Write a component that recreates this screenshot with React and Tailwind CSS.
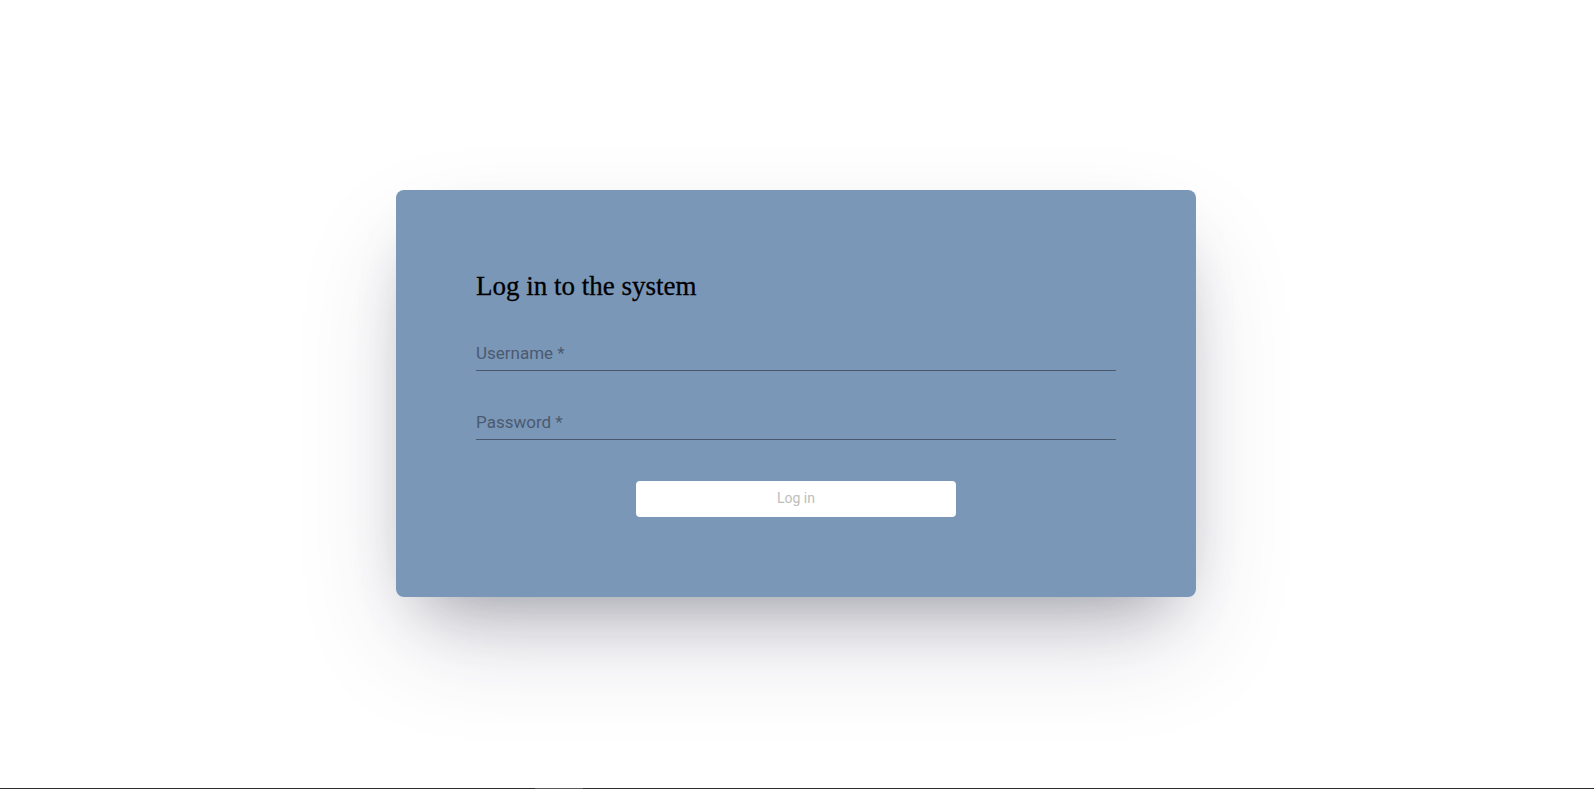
export default function App() {
  return (
    <div className="flex h-screen w-full flex-col bg-white">
      <div className="flex flex-1 items-center justify-center pb-[2px] pr-[2px]">
        <div className="w-[800px] rounded-[8px] bg-[#7a97b8] px-[80px] py-[80px] shadow-[0_50px_100px_-20px_rgba(50,50,93,0.25),0_30px_60px_-30px_rgba(0,0,0,0.3)]">
          <h1
            className="mt-[1px] text-[27px] leading-[30px] text-black [-webkit-text-stroke:0.3px_black]"
            style={{ fontFamily: '"Liberation Serif", serif' }}
          >
            Log in to the system
          </h1>
          <div className="mt-[41px] flex flex-col gap-[40px]" style={{ fontFamily: 'Roboto, sans-serif' }}>
            <input
              type="text"
              placeholder="Username *"
              className="block h-[29px] w-full border-b border-[#4a586c] bg-transparent pb-[5px] text-[17px] leading-[23px] text-[#4b5a6e] outline-none placeholder:text-[#4b5a6e]"
            />
            <input
              type="password"
              placeholder="Password *"
              className="block h-[29px] w-full border-b border-[#4a586c] bg-transparent pb-[5px] text-[17px] leading-[23px] text-[#4b5a6e] outline-none placeholder:text-[#4b5a6e]"
            />
          </div>
          <div className="mt-[41px] flex justify-center">
            <button
              className="h-[36px] w-[320px] rounded-[4px] bg-white text-[14px] text-[#bdbdbd]"
              style={{ fontFamily: 'Roboto, sans-serif' }}
            >
              Log in
            </button>
          </div>
        </div>
      </div>
      <div className="flex h-px w-full">
        <div className="h-px w-[535px] bg-[#2b2b2b]" />
        <div className="h-px w-[48px] bg-[#5a5a5a]" />
        <div className="h-px flex-1 bg-[#2b2b2b]" />
      </div>
    </div>
  );
}
